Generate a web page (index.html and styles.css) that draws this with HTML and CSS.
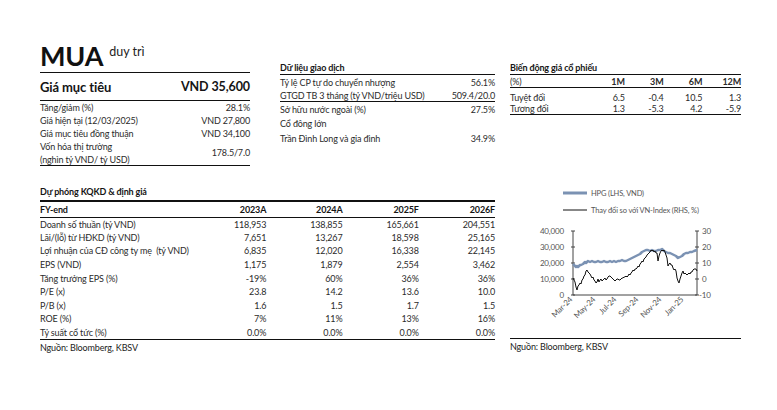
FILE: index.html
```html
<!DOCTYPE html>
<html lang="vi">
<head>
<meta charset="utf-8">
<link rel="stylesheet" href="styles.css">
</head>
<body>
<div class="page">
  <div class="top">
    <section class="rating">
      <div class="rating-head"><span class="rec">MUA</span><span class="rec-sub">duy trì</span></div>
      <div class="target"><span>Giá mục tiêu</span><span>VND 35,600</span></div>
      <div class="kv"><span>Tăng/giảm (%)</span><span>28.1%</span></div>
      <div class="kv"><span>Giá hiện tại (12/03/2025)</span><span>VND 27,800</span></div>
      <div class="kv"><span>Giá mục tiêu đồng thuận</span><span>VND 34,100</span></div>
      <div class="kv kv-two"><span>Vốn hóa thị trường<br>(nghìn tỷ VND/ tỷ USD)</span><span>178.5/7.0</span></div>
    </section>
    <section class="trade">
      <h3 class="sec-title">Dữ liệu giao dịch</h3>
      <div class="trow"><span>Tỷ lệ CP tự do chuyển nhượng</span><span>56.1%</span></div>
      <div class="trow trow-line"><span>GTGD TB 3 tháng (tỷ VND/triệu USD)</span><span>509.4/20.0</span></div>
      <div class="trow"><span>Sở hữu nước ngoài (%)</span><span>27.5%</span></div>
      <div class="trow"><span>Cổ đông lớn</span><span></span></div>
      <div class="trow trow-tall"><span>Trần Đình Long và gia đình</span><span>34.9%</span></div>
    </section>
    <section class="perf">
      <h3 class="sec-title">Biến động giá cổ phiếu</h3>
      <div class="pgrid phead"><span>(%)</span><span>1M</span><span>3M</span><span>6M</span><span>12M</span></div>
      <div class="pgrid prow prow-first"><span>Tuyệt đối</span><span>6.5</span><span>-0.4</span><span>10.5</span><span>1.3</span></div>
      <div class="pgrid prow prow-last"><span>Tương đối</span><span>1.3</span><span>-5.3</span><span>4.2</span><span>-5.9</span></div>
    </section>
  </div>
  <div class="bottom">
    <section class="forecast">
      <h3 class="fc-title">Dự phóng KQKD &amp; định giá</h3>
      <table class="fc">
        <thead>
          <tr><th>FY-end</th><th>2023A</th><th>2024A</th><th>2025F</th><th>2026F</th></tr>
        </thead>
        <tbody>
          <tr><td>Doanh số thuần (tỷ VND)</td><td>118,953</td><td>138,855</td><td>165,661</td><td>204,551</td></tr>
          <tr><td>Lãi/(lỗ) từ HĐKD (tỷ VND)</td><td>7,651</td><td>13,267</td><td>18,598</td><td>25,165</td></tr>
          <tr><td>Lợi nhuận của CĐ công ty mẹ &nbsp;(tỷ VND)</td><td>6,835</td><td>12,020</td><td>16,338</td><td>22,145</td></tr>
          <tr><td>EPS (VND)</td><td>1,175</td><td>1,879</td><td>2,554</td><td>3,462</td></tr>
          <tr><td>Tăng trưởng EPS (%)</td><td>-19%</td><td>60%</td><td>36%</td><td>36%</td></tr>
          <tr><td>P/E (x)</td><td>23.8</td><td>14.2</td><td>13.6</td><td>10.0</td></tr>
          <tr><td>P/B (x)</td><td>1.6</td><td>1.5</td><td>1.7</td><td>1.5</td></tr>
          <tr><td>ROE (%)</td><td>7%</td><td>11%</td><td>13%</td><td>16%</td></tr>
          <tr><td>Tỷ suất cổ tức (%)</td><td>0.0%</td><td>0.0%</td><td>0.0%</td><td>0.0%</td></tr>
        </tbody>
      </table>
      <p class="source">Nguồn: Bloomberg, KBSV</p>
    </section>
    <section class="chart">
      <svg class="chart-svg" width="231" height="155" viewBox="0 0 231 155">
        <line x1="53" y1="10" x2="77" y2="10" stroke="#7b92b3" stroke-width="3"/>
        <text x="81" y="13" class="lg">HPG (LHS, VND)</text>
        <line x1="53" y1="27" x2="77" y2="27" stroke="#111" stroke-width="1"/>
        <text x="81" y="30" class="lg">Thay đổi so với VN-Index (RHS, %)</text>

        <g class="ax">
          <line x1="63" y1="48" x2="63" y2="112"/>
          <line x1="187" y1="48" x2="187" y2="112"/>
          <line x1="63" y1="112" x2="187" y2="112"/>
          <line x1="61" y1="48" x2="65" y2="48"/>
          <line x1="61" y1="64" x2="65" y2="64"/>
          <line x1="61" y1="80" x2="65" y2="80"/>
          <line x1="61" y1="96" x2="65" y2="96"/>
          <line x1="61" y1="112" x2="65" y2="112"/>
          <line x1="185" y1="48" x2="189" y2="48"/>
          <line x1="185" y1="64" x2="189" y2="64"/>
          <line x1="185" y1="80" x2="189" y2="80"/>
          <line x1="185" y1="96" x2="189" y2="96"/>
          <line x1="185" y1="112" x2="189" y2="112"/>
        </g>
        <g class="tk tk-l">
          <text x="54" y="51">40,000</text>
          <text x="54" y="67">30,000</text>
          <text x="54" y="83">20,000</text>
          <text x="54" y="99">10,000</text>
          <text x="54" y="115">0</text>
        </g>
        <g class="tk">
          <text x="192" y="51">30</text>
          <text x="192" y="67">20</text>
          <text x="192" y="83">10</text>
          <text x="192" y="99">0</text>
          <text x="189" y="115">-10</text>
        </g>
        <g class="tk tk-x">
          <text transform="translate(63,117) rotate(-45)">Mar-24</text>
          <text transform="translate(86,117) rotate(-45)">May-24</text>
          <text transform="translate(107,117) rotate(-45)">Jul-24</text>
          <text transform="translate(129,117) rotate(-45)">Sep-24</text>
          <text transform="translate(152,117) rotate(-45)">Nov-24</text>
          <text transform="translate(174,117) rotate(-45)">Jan-25</text>
        </g>

        <polyline class="hpg" points="63,81 64,82 65,83 66,84 67,83 68,84 70,82 71,82 73,81 75,79 76,80 78,78 80,79 82,78 84,79 86,79 88,78 90,79 92,79 94,78 96,79 98,79 100,78 102,79 104,78 106,79 108,78 110,78 112,77 114,78 116,78 118,77 120,76 122,75 124,74 126,73 128,72 130,71 132,69 134,68 136,67 138,67 140,68 142,67 144,68 146,68 148,67 150,67 152,66 154,68 156,69 158,70 160,70 162,71 164,72 166,73 168,75 170,74 172,73 174,71 176,70 178,70 180,69 182,69 184,68 187,67"/>
        <polyline class="rel" points="63,95 64,97 65,99 66,104 67,107 68,103 69,102 70,100 71,101 72,97 73,96 74,93 75,92 76,88 77,87 78,89 79,90 80,91 81,93 82,95 83,94 84,97 85,98 86,100 87,99 88,96 89,99 90,97 91,96 92,98 93,97 94,96 95,95 96,97 97,96 98,94 99,93 100,93 101,94 102,95 103,96 104,97 105,98 106,97 107,96 108,96 109,97 110,97 111,96 112,95 113,95 114,94 115,94 116,93 117,94 118,93 119,91 120,92 121,90 122,89 123,87 124,88 125,86 126,86 127,85 128,83 129,84 130,81 131,80 132,78 133,79 134,76 135,75 136,74 137,72 138,71 139,70 140,69 141,67 142,68 143,67 144,69 145,68 146,70 147,70 148,78 149,73 150,70 151,68 152,67 153,68 154,67 155,69 156,72 157,75 158,83 159,81 160,80 161,82 162,82 163,85 164,87 165,86 166,88 167,95 168,98 169,100 170,96 171,93 172,90 173,88 174,91 175,90 176,91 177,92 178,91 179,90 180,91 181,89 182,89 183,87 184,86 185,86 186,86 187,88"/>
      </svg>
      <p class="source source-line">Nguồn: Bloomberg, KBSV</p>
    </section>
  </div>
</div>
</body>
</html>
```

FILE: styles.css
```css
* { box-sizing: border-box; }
html, body { margin: 0; padding: 0; background: #fff; }
body {
  width: 777px;
  height: 410px;
  overflow: hidden;
  font-family: Lato, "Noto Sans", sans-serif;
  font-size: 9px;
  letter-spacing: -0.15px;
  color: #2b2b2b;
}
.page { padding: 30px 0 0 40px; }

.top { display: flex; align-items: flex-start; }
.rating { width: 210px; }
.trade { width: 215px; margin-left: 30px; margin-top: 32px; }
.perf { width: 231px; margin-left: 15px; margin-top: 32px; }

.rating-head { height: 43px; line-height: 43px; border-bottom: 1.5px solid #111; white-space: nowrap; }
.rec { font-size: 27px; font-weight: 700; color: #111; letter-spacing: -0.2px; }
.rec-sub { font-size: 12.5px; color: #222; margin-left: 6px; vertical-align: 10px; letter-spacing: 0; }

.target {
  display: flex; justify-content: space-between; align-items: center;
  height: 28px; border-bottom: 1px solid #111;
  font-size: 13px; font-weight: 700; color: #151515; letter-spacing: -0.1px;
}
.target span:last-child { font-size: 12.5px; }
.kv { display: flex; justify-content: space-between; align-items: center; height: 13px; line-height: 13px; }
.kv-two { height: 26px; border-bottom: 1.5px solid #111; }
.kv-two span:first-child { line-height: 13px; }

.sec-title {
  margin: 0; font-size: 9px; font-weight: 700; color: #151515;
  height: 13px; line-height: 12px; border-bottom: 1px solid #111;
}
.trow { display: flex; justify-content: space-between; align-items: center; height: 14px; }
.trow-line { height: 13px; border-bottom: 1px solid #111; }
.trow-tall { height: 16px; }

.pgrid { display: grid; grid-template-columns: 76px repeat(4, 1fr); align-items: center; }
.pgrid span:not(:first-child) { text-align: right; }
.phead { height: 13px; border-bottom: 1px solid #111; }
.phead span:not(:first-child) { font-weight: 700; }
.prow-first { height: 15px; padding-top: 3px; }
.prow-last { height: 12px; border-bottom: 1px solid #111; }

.bottom { display: flex; align-items: flex-start; margin-top: 17px; }
.forecast { width: 456px; }
.chart { width: 231px; margin-left: 14px; }

.fc-title { margin: 0; font-size: 9px; font-weight: 700; color: #151515; height: 17px; line-height: 17px; }
.fc { width: 455px; border-collapse: collapse; table-layout: fixed; }
.fc th, .fc td { padding: 0; text-align: right; white-space: nowrap; }
.fc th:first-child, .fc td:first-child { text-align: left; width: 150px; }
.fc thead th { font-weight: 700; color: #151515; height: 16px; border-top: 2px solid #111; border-bottom: 1px solid #111; }
.fc td { height: 13.6px; line-height: 13px; }
.fc tbody tr:last-child td { border-bottom: 1.5px solid #111; }

.source { margin: 0; height: 16px; line-height: 16px; font-size: 9px; color: #222; }
.source-line { border-top: 1.5px solid #111; }

.chart-svg { display: block; }
.lg { font-size: 7.5px; fill: #555; font-family: Lato, "Noto Sans", sans-serif; }
.ax line { stroke: #444; stroke-width: 1; }
.tk text { font-size: 8px; fill: #555; font-family: Lato, "Noto Sans", sans-serif; }
.tk-l text { text-anchor: end; }
.tk-x text { text-anchor: end; }
.hpg { fill: none; stroke: #7b92b3; stroke-width: 2.5; stroke-linejoin: round; }
.rel { fill: none; stroke: #111; stroke-width: 1; stroke-linejoin: round; }
```
